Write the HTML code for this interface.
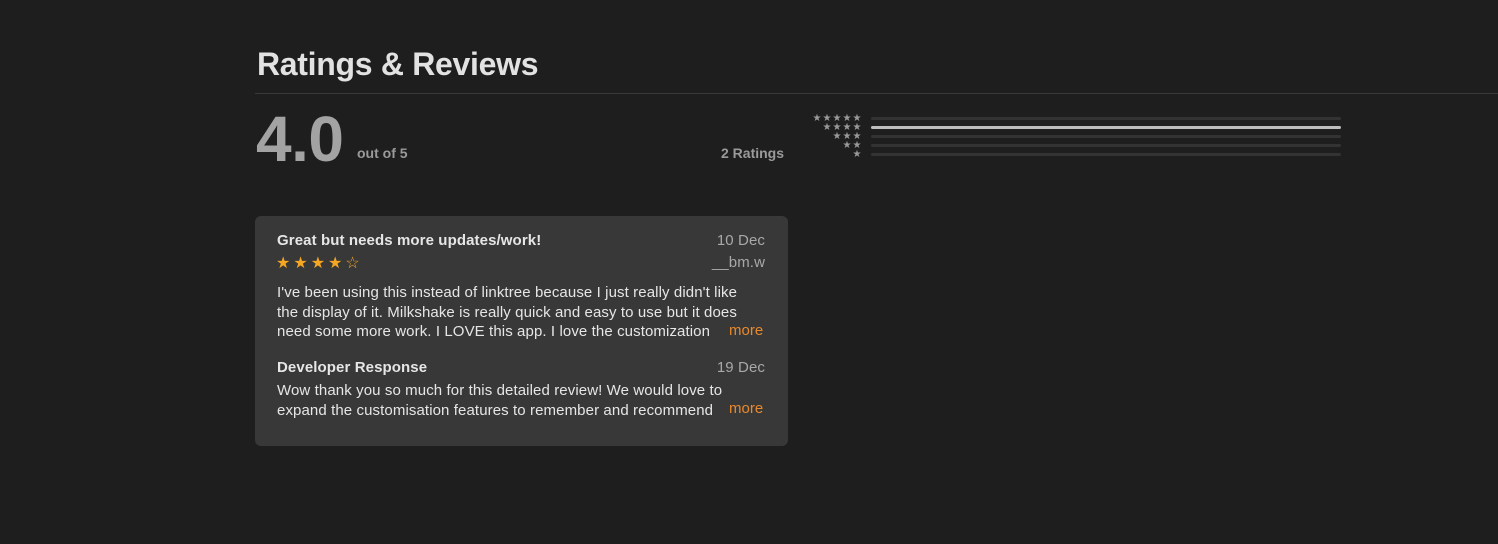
<!DOCTYPE html>
<html><head><style>
body{margin:0;width:1498px;height:544px;background:#1e1e1e;font-family:"Liberation Sans",sans-serif;position:relative;overflow:hidden}
.a{position:absolute;white-space:nowrap}
.h{left:257px;top:46px;font-size:32px;font-weight:bold;color:#e2e2e2;letter-spacing:-0.3px}
.line{left:255px;top:93px;width:1243px;height:1px;background:#3a3a3a}
.big{left:256px;top:102px;font-size:64px;font-weight:bold;color:#a3a3a3;letter-spacing:-0.5px}
.sm{font-size:14px;font-weight:bold;color:#9a9a9a}
.stars{left:800px;width:62px;text-align:right;font-size:10px;color:#999;letter-spacing:-2px;line-height:9px}
.stars span{display:inline-block;width:10px;text-align:center;letter-spacing:0}
.bar{left:871px;width:470px;height:3px;border-radius:2px;background:#333}
.card{left:255px;top:216px;width:533px;height:230px;background:#383838;border-radius:6px}
.t{font-size:15px;color:#e6e6e6;line-height:19.5px;letter-spacing:0.1px}
.b{font-weight:bold}
.g{color:#a8a8a8}
.more{color:#e8892d;font-size:15px}
</style></head><body>
<div class="a h">Ratings &amp; Reviews</div>
<div class="a line"></div>
<div class="a big">4.0</div>
<div class="a sm" style="left:357px;top:145px">out of 5</div>
<div class="a sm" style="left:721px;top:145px">2 Ratings</div>
<div class="a stars" style="top:114px"><span>★</span><span>★</span><span>★</span><span>★</span><span>★</span></div>
<div class="a stars" style="top:123px"><span>★</span><span>★</span><span>★</span><span>★</span></div>
<div class="a stars" style="top:132px"><span>★</span><span>★</span><span>★</span></div>
<div class="a stars" style="top:141px"><span>★</span><span>★</span></div>
<div class="a stars" style="top:150px"><span>★</span></div>
<div class="a bar" style="top:117px"></div>
<div class="a bar" style="top:126px;background:#bdbdbd"></div>
<div class="a bar" style="top:135px"></div>
<div class="a bar" style="top:144px"></div>
<div class="a bar" style="top:153px"></div>
<div class="a card"></div>
<div class="a t b" style="left:277px;top:231px">Great but needs more updates/work!</div>
<div class="a t g" style="right:733px;top:231px">10 Dec</div>
<div class="a" style="left:276px;top:253px;font-size:16px;color:#f5a623;letter-spacing:3px">★★★★☆</div>
<div class="a t g" style="right:733px;top:253px">__bm.w</div>
<div class="a t" style="left:277px;top:283px">I've been using this instead of linktree because I just really didn't like<br>the display of it. Milkshake is really quick and easy to use but it does<br>need some more work. I LOVE this app. I love the customization</div>
<div class="a more" style="left:729px;top:322px">more</div>
<div class="a t b" style="left:277px;top:358px">Developer Response</div>
<div class="a t g" style="right:733px;top:358px">19 Dec</div>
<div class="a t" style="left:277px;top:381px">Wow thank you so much for this detailed review! We would love to<br>expand the customisation features to remember and recommend</div>
<div class="a more" style="left:729px;top:400px">more</div>
</body></html>
